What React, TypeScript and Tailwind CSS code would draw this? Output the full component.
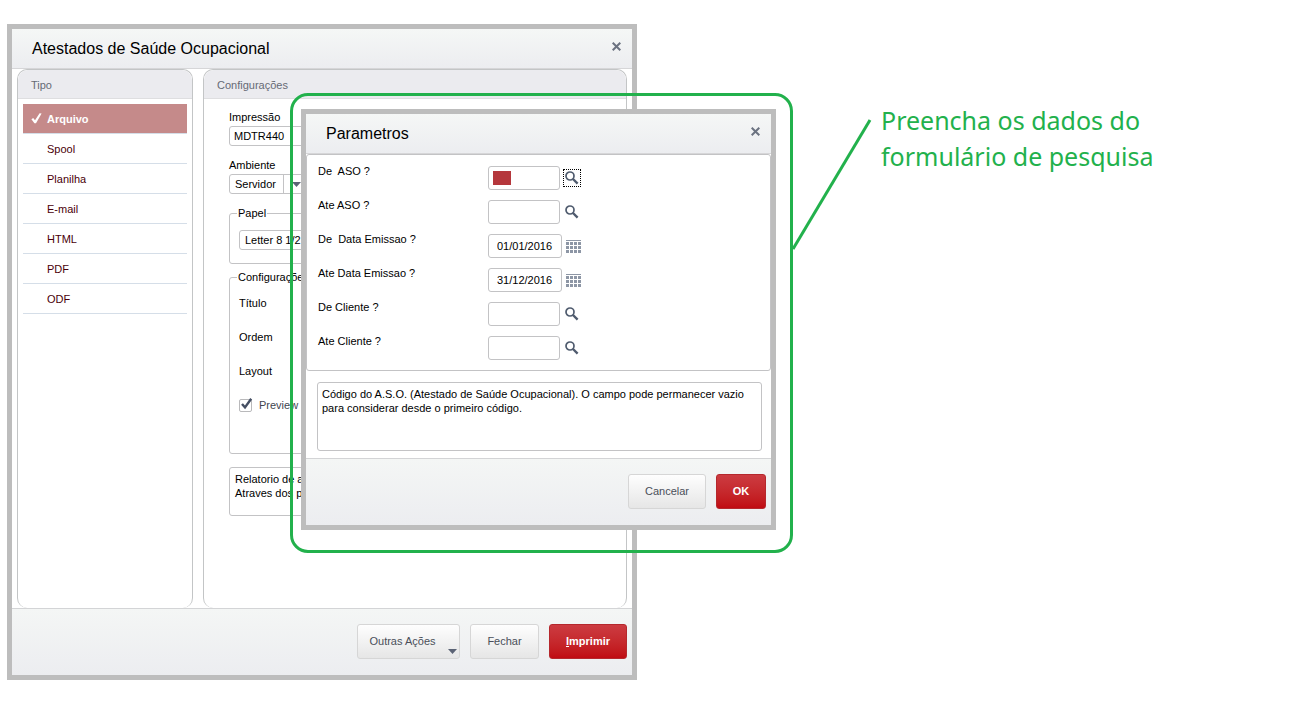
import { useState } from "react";
import type { ReactNode } from "react";

type Field = {
  id: string;
  label: string;
  kind: "search" | "date";
  value?: string;
  active?: boolean;
};

const types = ["Arquivo", "Spool", "Planilha", "E-mail", "HTML", "PDF", "ODF"];

const fields: Field[] = [
  { id: "de-aso", label: "De  ASO ?", kind: "search", active: true },
  { id: "ate-aso", label: "Ate ASO ?", kind: "search" },
  { id: "de-data", label: "De  Data Emissao ?", kind: "date", value: "01/01/2016" },
  { id: "ate-data", label: "Ate Data Emissao ?", kind: "date", value: "31/12/2016" },
  { id: "de-cliente", label: "De Cliente ?", kind: "search" },
  { id: "ate-cliente", label: "Ate Cliente ?", kind: "search" },
];

function CloseIcon() {
  return (
    <svg width="9" height="9" viewBox="0 0 9 9" fill="none" stroke="#6b7280" strokeWidth="2">
      <path d="M0.7 0.7 8.3 8.3M8.3 0.7 0.7 8.3" />
    </svg>
  );
}

function SearchIcon() {
  return (
    <svg width="14" height="14" viewBox="0 0 14 14" fill="none" stroke="#4f5b6e">
      <circle cx="5" cy="5" r="4" strokeWidth="1.7" />
      <path d="M8 8 12.6 12.6" strokeWidth="2.4" />
    </svg>
  );
}

function CalendarIcon() {
  return (
    <svg width="15" height="13" viewBox="0 0 15 13" fill="#8d96a5" shapeRendering="crispEdges">
      <rect width="15" height="1" />
      {[2, 6, 10].map((y) =>
        [0, 4, 8, 12].map((x) => <rect key={`${x}-${y}`} x={x} y={y} width="3" height="3" />)
      )}
    </svg>
  );
}

function ArrowIcon() {
  return (
    <svg width="9" height="5" viewBox="0 0 9 5" fill="#5b6375">
      <path d="M0 0H9L4.5 5Z" />
    </svg>
  );
}

function WindowHeader({ title }: { title: string }) {
  return (
    <header className="flex h-10 items-center justify-between border-b border-[#d6d6d8] bg-linear-to-b from-[#f5f7f6] to-[#ecedf0] pt-px pr-[11px] pl-5">
      <h2 className="text-base">{title}</h2>
      <button type="button" aria-label="Fechar janela" className="pb-[5px]">
        <CloseIcon />
      </button>
    </header>
  );
}

function WindowFooter({ children }: { children: ReactNode }) {
  return (
    <footer className="flex h-[67px] items-center justify-end gap-[10px] border-t border-[#d3d4d6] bg-linear-to-b from-[#f4f6f5] to-[#ecedf0] px-[5px] pb-[2px]">
      {children}
    </footer>
  );
}

function PanelTitle({ children }: { children: ReactNode }) {
  return (
    <h3 className="rounded-t-[10px] border-b border-[#dedee0] bg-[#ebebef] px-[13px] pt-2 pb-[6px] text-[#666a75]">
      {children}
    </h3>
  );
}

const plainButton =
  "h-[35px] rounded-[3px] border border-[#d6d6d6] bg-linear-to-b from-[#fefefe] to-[#e6e6e6] text-[#4a4f59]";
const redButton =
  "h-[35px] rounded-[3px] border border-[#b5282d] bg-linear-to-b from-[#cc3b41] to-[#c00a12] font-bold text-white";
const inputBox = "rounded-[3px] border border-[#c3c3c5] bg-white";

function ReportWindow() {
  const [selected, setSelected] = useState("Arquivo");

  return (
    <section className="w-[630px] border-[5px] border-[#bdbdbd] bg-white">
      <WindowHeader title="Atestados de Saúde Ocupacional" />
      <div className="flex min-h-[539px] gap-[10px] px-[5px]">
        <div className="w-44 rounded-[10px] border-x border-t border-[#c3c5c6]">
          <PanelTitle>Tipo</PanelTitle>
          <ul className="px-[5px] pt-[5px]">
            {types.map((type) => (
              <li key={type} className="border-b border-[#d5dee8]">
                <button
                  type="button"
                  onClick={() => setSelected(type)}
                  className={
                    type === selected
                      ? "flex h-[29px] w-full items-center bg-[#c58a8a] text-left font-bold text-white"
                      : "flex h-[29px] w-full items-center text-left text-[#4a0008]"
                  }
                >
                  <span className="flex w-6 justify-center pl-[3px]">
                    {type === selected && (
                      <svg width="11" height="11" viewBox="0 0 11 11" fill="white">
                        <path d="M0.4 6.2 2.2 4.9 4 7.3 8.6 0.2 10.6 0.6 5 10.2 3.4 10.2Z" />
                      </svg>
                    )}
                  </span>
                  {type}
                </button>
              </li>
            ))}
          </ul>
        </div>

        <div className="flex-1 rounded-[10px] border-x border-t border-[#c3c5c6]">
          <PanelTitle>Configurações</PanelTitle>
          <form className="flex flex-col px-[25px] pt-[11px]">
            <label htmlFor="impressao">Impressão</label>
            <input id="impressao" defaultValue="MDTR440" className={`${inputBox} mt-[2px] h-5 w-full px-1`} />

            <label htmlFor="ambiente" className="mt-3">
              Ambiente
            </label>
            <div className="relative mt-[2px] w-20">
              <select id="ambiente" className={`${inputBox} block h-5 w-full appearance-none px-[5px]`}>
                <option>Servidor</option>
              </select>
              <span className="pointer-events-none absolute inset-y-0 right-0 flex w-[26px] items-center justify-center border-l border-[#c3c3c5]">
                <ArrowIcon />
              </span>
            </div>

            <fieldset className="mt-3 rounded-[3px] border border-[#c3c3c5] px-[9px] pt-[10px] pb-[13px]">
              <legend className="-ml-[2px] px-px">Papel</legend>
              <select aria-label="Papel" className={`${inputBox} block h-5 w-full appearance-none px-[5px]`}>
                <option>Letter 8 1/2 x 11 in</option>
              </select>
            </fieldset>

            <fieldset className="mt-[6px] rounded-[3px] border border-[#c3c3c5] px-[9px] pt-3 pb-[41px]">
              <legend className="-ml-[2px] px-px">Configurações</legend>
              <div className="flex flex-col gap-5">
                <span>Título</span>
                <span>Ordem</span>
                <span>Layout</span>
                <label className="relative flex items-center gap-[7px] text-[#41454f]">
                  <input
                    type="checkbox"
                    defaultChecked
                    className="peer size-[13px] appearance-none rounded-[2px] border border-[#b9b9bb] bg-white"
                  />
                  <svg
                    className="pointer-events-none absolute top-0 left-[2px] hidden peer-checked:block"
                    width="12"
                    height="12"
                    viewBox="0 0 12 12"
                    fill="none"
                    stroke="#454f63"
                    strokeWidth="2.4"
                  >
                    <path d="M1 6 4 9.4 10.2 0.8" />
                  </svg>
                  Preview
                </label>
              </div>
            </fieldset>

            <textarea
              aria-label="Descrição do relatório"
              readOnly
              defaultValue={"Relatorio de atestados\nAtraves dos parametros"}
              className={`${inputBox} mt-[13px] h-[49px] resize-none px-[5px] py-1`}
            />
          </form>
        </div>
      </div>
      <WindowFooter>
        <button type="button" className={`${plainButton} relative w-[103px] pr-3`}>
          Outras Ações
          <span className="absolute right-[2px] bottom-1">
            <ArrowIcon />
          </span>
        </button>
        <button type="button" className={`${plainButton} w-[69px]`}>
          Fechar
        </button>
        <button type="button" className={`${redButton} w-[78px]`}>
          <u>I</u>mprimir
        </button>
      </WindowFooter>
    </section>
  );
}

function FieldRow({ field }: { field: Field }) {
  return (
    <div className="flex h-[34px] items-start">
      <label htmlFor={field.id} className="w-[170px] whitespace-pre">
        {field.label}
      </label>
      <div className="relative mt-[2px] flex items-center">
        <input
          id={field.id}
          defaultValue={field.value}
          className={
            field.kind === "date"
              ? `${inputBox} h-6 w-[74px] px-2`
              : `${inputBox} h-6 w-[72px] px-1`
          }
        />
        {field.active && <span className="pointer-events-none absolute left-[5px] h-[14px] w-[18px] bg-[#b5373c]" />}
        <button
          type="button"
          aria-label={field.kind === "date" ? "Abrir calendário" : "Pesquisar"}
          className={
            field.active
              ? "ml-[3px] grid size-[18px] place-items-center border border-dotted border-black"
              : field.kind === "date"
                ? "ml-[2px] grid size-[18px] place-items-center"
                : "ml-[3px] grid size-[18px] place-items-center"
          }
        >
          {field.kind === "date" ? <CalendarIcon /> : <SearchIcon />}
        </button>
      </div>
    </div>
  );
}

function ParamsWindow() {
  return (
    <section
      role="dialog"
      aria-label="Parametros"
      className="absolute top-[109px] left-[301px] w-[475px] border-[5px] border-[#bdbdbd] bg-white"
    >
      <WindowHeader title="Parametros" />
      <form className="rounded-[3px] border border-[#c3c3c5] px-[11px] pt-[9px] pb-[2px]">
        {fields.map((field) => (
          <FieldRow key={field.id} field={field} />
        ))}
      </form>
      <p className="mt-[11px] mr-[9px] mb-[7px] ml-[11px] min-h-[69px] rounded-[3px] border border-[#c3c3c5] px-1 py-1">
        Código do A.S.O. (Atestado de Saúde Ocupacional). O campo pode permanecer vazio para considerar desde o
        primeiro código.
      </p>
      <WindowFooter>
        <button type="button" className={`${plainButton} w-[78px]`}>
          Cancelar
        </button>
        <button type="button" className={`${redButton} w-[50px]`}>
          OK
        </button>
      </WindowFooter>
    </section>
  );
}

// green outline around the dialog with its leader line and caption
function Callout() {
  return (
    <>
      <div className="pointer-events-none absolute top-[93px] left-[290px] h-[460px] w-[503px] rounded-[18px] border-[3px] border-[#22b14c]" />
      <svg
        className="pointer-events-none absolute top-[118px] left-[792px]"
        width="80"
        height="132"
        viewBox="0 0 80 132"
        fill="none"
        stroke="#22b14c"
        strokeWidth="3"
      >
        <path d="M1 131 78 2" />
      </svg>
      <p className="absolute top-[102px] left-[881px] w-[300px] font-['Noto_Sans',sans-serif] text-[25px] leading-9 text-[#22b14c]">
        Preencha os dados do formulário de pesquisa
      </p>
    </>
  );
}

export default function App() {
  return (
    <main className="relative min-h-screen bg-white pt-6 pl-[7px] font-['Liberation_Sans',Arial,sans-serif] text-[11px] leading-[14px] text-black">
      <ReportWindow />
      <ParamsWindow />
      <Callout />
    </main>
  );
}
